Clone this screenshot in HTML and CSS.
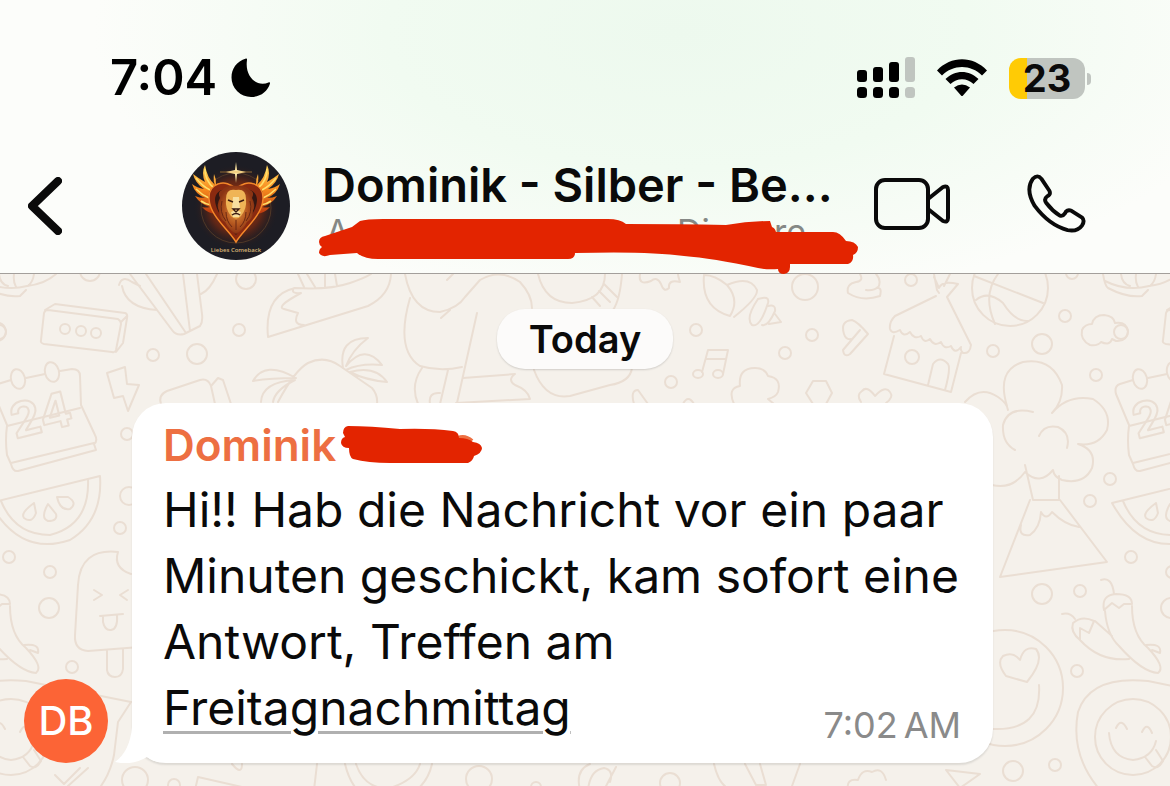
FILE: index.html
```html
<!DOCTYPE html>
<html lang="de">
<head>
  <meta charset="UTF-8">
  <meta name="viewport" content="width=device-width, initial-scale=1.0">
  <title>Dominik - Silber</title>
  <link rel="stylesheet" href="styles.css">
</head>
<body>
  <header class="header">
    <div class="status">
      <span class="clock">7:04</span>
      <svg class="moon" width="40" height="40" viewBox="0 0 40 40"><path d="M15 .6C5.500 3.500 .500 11 .500 19.500a19.500 19.500 0 0 0 19.500 19.500c9 0 16.500-5 19-13.500.300-1-.500-1.500-1.500-1C26 29.500 13.500 19 16 2c.200-1-.200-1.600-1-1.400Z"/></svg>
      <div class="status-icons">
        <svg width="58" height="42" viewBox="0 0 58 42">
          <g>
            <rect x="0" y="13" width="10" height="12" rx="3"/>
            <rect x="16" y="10" width="10" height="15" rx="3"/>
            <rect x="32" y="5" width="10" height="20" rx="3"/>
            <rect x="0" y="30" width="10" height="11" rx="3.500"/>
            <rect x="16" y="30" width="10" height="11" rx="3.500"/>
            <rect x="32" y="30" width="10" height="11" rx="3.500"/>
          </g>
          <g fill="#c0c5c0">
            <rect x="48" y="0" width="10" height="25" rx="3"/>
            <rect x="48" y="30" width="10" height="11" rx="3.500"/>
          </g>
        </svg>
        <svg class="wifi" width="50" height="38" viewBox="0 0 50 38">
          <path d="M0 11.500C14-3.500 36-3.500 50 11.500L45 16.500C34 5 16 5 5 16.500Z"/>
          <path d="M8.500 20C18 10.500 32 10.500 41.500 20L36.500 25C30 18.500 20 18.500 13.500 25Z"/>
          <path d="M17 28.500Q25 22.500 33 28.500L26 36.500Q25 37.500 24 36.500Z"/>
        </svg>
        <span class="battery">23</span>
      </div>
    </div>

    <div class="nav">
      <button class="icon-button back" aria-label="Back">
        <svg width="34" height="58" viewBox="0 0 34 58"><path d="M30 4 4 29 30 54"/></svg>
      </button>
      <svg class="group-photo" width="108" height="108" viewBox="0 0 108 108">
        <defs>
          <linearGradient id="fire" x1="0" y1="0" x2="0" y2="1">
            <stop offset="0" stop-color="#ffd45a"/>
            <stop offset=".5" stop-color="#f78a1d"/>
            <stop offset="1" stop-color="#b9380f"/>
          </linearGradient>
          <radialGradient id="glow">
            <stop offset="0" stop-color="#c2440f"/>
            <stop offset=".6" stop-color="#7d2a10" stop-opacity=".7"/>
            <stop offset="1" stop-color="#1b1a20" stop-opacity="0"/>
          </radialGradient>
          <radialGradient id="mane">
            <stop offset="0" stop-color="#e79a45"/>
            <stop offset=".6" stop-color="#b4571f"/>
            <stop offset="1" stop-color="#8a3414"/>
          </radialGradient>
        </defs>
        <circle cx="54" cy="54" r="54" fill="#1d1d24"/>
        <circle cx="54" cy="55" r="43" fill="url(#glow)"/>
        <circle cx="54" cy="56" r="35" fill="none" stroke="#6a4a2c" stroke-width=".6"/>
        <g id="wing">
          <path fill="url(#fire)" d="M42 36Q38 30 34 32Q34 26 32 22Q31 29 33 33Q25 26 23 13Q19 21 23 30Q16 26 11 22Q13 31 22 37Q15 36 10 32Q13 42 23 46Q17 46 13 44Q18 52 28 55Q24 56 20 55Q25 61 34 62Q24 49 28 38Q33 33 42 36Z"/>
          <path fill="none" stroke="#ffe06a" stroke-width="1.600" d="M23 17Q23 29 32 36M14 26Q20 34 28 38M14 37Q20 43 27 46M19 49Q23 52 29 53"/>
        </g>
        <use href="#wing" transform="matrix(-1 0 0 1 108 0)"/>
        <path d="M54 90C46 77 28 64 27 47C26 31 44 26 54 37C64 26 82 31 81 47C80 64 62 77 54 90Z" fill="#8a2a10" stroke="#f5882a" stroke-width="1.500"/>
        <path d="M54 83C47 72 34 63 33 48C33 39 43 33 54 42C65 33 75 39 75 48C74 63 61 72 54 83Z" fill="#351712"/>
        <path fill="url(#mane)" d="M54 34Q46 32 40 38Q35 40 38 46Q34 53 37 59Q37 67 43 70Q47 78 54 82Q61 78 65 70Q71 67 71 59Q74 53 70 46Q73 40 68 38Q62 32 54 34Z"/>
        <path fill="none" stroke="#682612" d="M40 49Q37 60 44 69M44 60Q44 69 50 75M68 49Q71 60 64 69M64 60Q64 69 58 75M54 68V78"/>
        <path fill="#efb456" d="M54 38Q44 36 44 47Q43 57 49 64Q54 69 59 64Q65 57 64 47Q64 36 54 38Z"/>
        <path fill="#f8dfa0" d="M51 45H57L58 57Q54 60 50 57ZM49 60Q54 57 59 60L57 65H51Z"/>
        <path fill="none" stroke="#3a1a10" stroke-width="1.400" d="M46 48L51 50M62 48L57 50M51 57H57L54 60ZM50 63Q54 60 58 63"/>
        <path fill="#ffe8a2" d="M54 10L55 18L64 20L55 22L54 31L53 22L44 20L53 18Z"/>
        <path stroke="#d99b42" stroke-width=".6" d="M38 20H70"/>
        <text x="54" y="100" text-anchor="middle" class="photo-label">Liebes Comeback</text>
      </svg>
      <div class="chat-info">
        <h1 class="chat-title">Dominik - Silber - Be...</h1>
        <div class="members"><span>A</span><span>Di</span><span>re</span></div>
        <svg class="marker marker-members" width="542" height="56" viewBox="0 0 542 56">
          <path d="M7 17Q1 18 1 23Q1 26 4 28Q1 30 1 34Q4 39 12 36L39 34Q46 40 60 40H250Q257 40 257 34Q330 32 366 37Q394 39 440 49Q450 51 460 50Q460 55 466 55Q472 54 472 48V45H530Q536 43 535 36Q540 34 540 28Q537 22 528 22Q522 13 515 13H458Q457 9 454 8L452 2Q430 2 408 6Q360 5 308 5Q302 0 290 0H65Q48 0 42 2L34 8Z"/>
        </svg>
      </div>
      <button class="icon-button video" aria-label="Video call">
        <svg width="76" height="52" viewBox="0 0 76 52"><rect x="2" y="2" width="52" height="48" rx="9"/><path d="M54 21 69 9Q74 7 74 12V40Q74 45 69 43L54 31"/></svg>
      </button>
      <button class="icon-button phone" aria-label="Voice call">
        <svg width="60" height="60" viewBox="0 0 62 62"><path d="M7 5Q12 0 16 5L24 17Q26 21 22 23Q18 26 21 30Q27 38 35 43Q38 44 40 41Q42 36 47 38L58 45Q61 48 58 53Q53 60 43 58Q24 53 9 33Q-1 16 7 5Z"/></svg>
      </button>
    </div>
  </header>

  <main class="chat">
    <svg class="wallpaper" viewBox="0 274 1170 512" preserveAspectRatio="xMinYMin slice" aria-hidden="true">
      <defs>
        <g id="doodles">
          <!-- basket, box, calendar -->
          <path d="M-19 274Q-17 286-14 288Q5 298 20 296L26 290M-17 281Q5 292 27 286Q45 284 56 274M14 274Q13 282 16 287M34 274Q33 282 28 286M-1 274Q0 284 8 286"/>
          <path d="M48 310 118 319Q121 321 121 324L116 350Q115 353 112 352L44 344Q40 343 41 340L44 313Q45 310 48 310ZM45 310 55 304 125 313Q128 314 127 318L123 343 116 352M121 322 127 316"/>
          <circle cx="65" cy="329" r="5"/><circle cx="81" cy="331" r="5"/><circle cx="96" cy="333" r="5"/>
          <path d="M11 380-2 384Q-8 386-6 394L7 425M26 378 45 374M60 371 72 369Q80 369 80 376L81 405 95 435Q98 441 94 444L96 450 18 471Q13 472 11 464L7 455Q5 440 7 426L80 408M11 463 94 443"/>
          <ellipse cx="18" cy="379" rx="7" ry="10" transform="rotate(-14 18 379)"/>
          <ellipse cx="52" cy="372" rx="7" ry="10" transform="rotate(-14 52 372)"/>
          <text x="15" y="439" transform="rotate(-14 15 439)">24</text>
          <!-- bolt, melon, ice lolly -->
          <path d="M107 373 125 367 127 384 139 385 128 411 123 396 114 398Z"/>
          <path d="M-10 503 100 476Q103 520 70 540Q20 557-10 503ZM1 501Q15 535 50 535Q90 525 88 479"/>
          <path d="M34 503Q20 513 24 518Q32 524 36 513ZM48 504Q40 518 48 521Q58 521 56 514ZM57 497Q60 511 70 509Q78 503 68 497Z"/>
          <path d="M118 552Q80 548 78 585L75 635Q74 650 88 651L140 647M118 552Q113 568 131 574M94 590 102 595 94 600M128 590 120 595 127 600M100 616 123 614M103 616V622Q105 631 111 630Q118 629 117 615M107 651V670Q108 677 115 677Q122 677 123 669V649"/>
          <path d="M131 702Q60 688 26 681Q-32 675-44 712Q-52 755-22 790M131 702 118 722 114 755Q110 775 98 790M55 775 64 784 80 768M68 786 88 768"/>
          <!-- cactus, fox tail, island -->
          <path d="M130 274 172 330Q176 336 184 334L200 326Q203 322 202 314L197 274M146 274 186 333M183 274 190 331M119 285Q122 275 132 282L140 286M122 286Q126 308 157 310M217 274Q210 290 201 294"/>
          <path d="M268 337 368 306Q390 295 391 274M268 337Q264 295 295 288Q330 290 350 283Q365 278 371 274M294 288Q290 294 301 293Q275 307 284 309L298 313Q292 325 304 325M298 274 304 287M307 274 315 287M325 274V287M335 274 337 286"/>
          <path d="M278 402Q295 370 308 363Q325 355 340 366L372 388Q378 395 377 404M253 381Q265 360 296 378Q270 378 253 381M295 380Q262 382 261 402M295 380Q275 390 273 402M343 368Q338 338 368 338Q352 350 346 366Q365 343 382 365Q360 363 346 370M350 372Q375 365 387 382Q365 380 350 372"/>
          <path d="M161 404Q158 395 167 391L200 380Q208 378 211 386L215 404M211 386 218 378 223 380 231 404"/>
          <!-- swimmer and ring behind the date -->
          <path d="M405 274Q412 312 440 312Q458 308 465 297L480 280Q500 268 520 282Q532 295 532 308M441 318 450 310M410 298Q395 350 420 366Q440 372 462 367M477 313 457 403M422 368Q410 385 418 404M448 370 440 404M463 378 515 374Q507 380 515 385Q528 390 530 399L456 403M430 404Q428 392 440 393M447 280 453 274"/>
          <path d="M538 274Q545 303 572 303Q605 300 605 274M622 274Q620 300 613 310M604 284 617 297M599 291 610 302M592 297 600 306M534 370Q545 400 570 396L610 385Q630 382 632 368"/>
          <path d="M640 274Q638 286 651 281Q657 276 661 284Q664 293 669 288Q668 279 680 282Q678 276 678 274M634 404Q630 390 638 390L648 404M683 404Q688 394 694 404"/>
          <path d="M704 275Q701 308 730 316Q740 300 727 285Q715 275 704 275M727 285Q750 275 757 290Q758 298 734 317M758 299Q770 295 768 303Q760 328 752 325Q745 318 758 299M768 306Q776 304 775 311Q768 327 762 325M775 314 781 322 769 324"/>
          <path d="M702 372 708 350 728 350 723 374M706 359 726 359"/>
          <ellipse cx="698" cy="374" rx="5" ry="4"/><ellipse cx="718" cy="374" rx="5" ry="4"/>
          <path d="M734 404Q727 388 740 386Q738 368 755 368Q765 368 768 376Q782 378 778 392Q776 397 768 399L774 404"/>
          <!-- hat, hut, ball, cloud -->
          <path d="M860 274Q864 281 856 282Q846 284 848 293Q862 302 880 296Q882 288 878 288Q882 280 876 274M866 290Q874 291 878 287"/>
          <path d="M844 334Q840 321 852 320Q858 322 868 334L850 354Q844 358 843 350L860 330M844 334Q846 340 851 339"/>
          <path d="M934 274 937 290 939 293M950 274 944 286M934 277 939 288Q942 280 958 284L947 297 971 345Q970 354 963 353Q960 350 961 347Q955 355 951 346Q944 350 941 342Q934 347 930 339Q924 344 921 336Q914 340 910 332Q903 338 900 330Q892 335 890 329Q889 322 895 316L936 296M894 336 884 374 951 392 961 353M928 385 933 364Q940 355 948 364Q951 368 945 390"/>
          <circle cx="912" cy="357" r="7"/>
          <circle cx="1010" cy="288" r="38"/>
          <path d="M974 276 1043 303M998 274Q982 295 995 324M976 300Q988 290 1003 303Q1015 322 1028 321"/>
          <path d="M1090 345Q1080 340 1082 330Q1085 324 1092 324Q1094 315 1104 315Q1114 316 1115 323Q1126 321 1128 331Q1127 342 1116 341L1112 339Q1110 346 1101 342Q1098 346 1090 345Z"/>
          <path d="M813 381H826L832 393 826 404H813L806 393ZM861 402Q856 395 862 391Q867 385 875 396Q885 385 890 392Q894 397 886 403"/>
          <!-- tree and peak -->
          <path d="M965 402Q980 385 998 397Q1007 403 1008 410M1007 406Q996 370 1023 362Q1052 357 1062 385Q1063 402 1052 413Q1068 394 1093 399Q1112 411 1107 430Q1098 447 1078 444Q1097 450 1092 468Q1084 485 1062 480Q1054 477 1053 470Q1040 486 1025 472Q1012 490 992 485M1033 412Q1008 406 1003 425Q1002 443 1015 450M1039 436Q1044 424 1058 427Q1071 433 1067 448M1025 465 1033 500H1059V476M1030 500 1000 577 1107 562 1060 500M1021 525Q1018 537 1030 535Q1040 528 1041 512Q1046 521 1052 512Q1065 525 1079 527"/>
          <!-- faces and chillies -->
          <circle cx="1005" cy="688" r="58"/>
          <path d="M993 729Q1042 731 1039 685M1027 682 1006 676Q996 663 1003 656Q1013 651 1020 660Q1024 645 1036 649Q1045 660 1027 682Z"/>
          <path d="M1101 580Q1112 576 1114 594M1104 610Q1101 595 1116 594Q1132 594 1132 604L1124 604 1119 608 1112 603ZM1105 611Q1107 635 1119 646Q1142 672 1158 673Q1166 667 1148 648Q1132 635 1132 606M1062 614Q1070 612 1075 619M1080 640Q1070 632 1073 623Q1082 615 1094 621L1089 633 1080 628ZM1095 621 1112 636M1080 640Q1100 662 1129 659M1146 645Q1162 643 1160 653L1152 650"/>
          <circle cx="1133" cy="737" r="38"/>
          <path d="M1116 728Q1121 717 1127 729M1142 732Q1147 721 1152 733M1109 733Q1111 758 1133 760Q1152 758 1156 741M1145 757 1152 766Q1158 770 1163 761L1156 750"/>
          <!-- strip below the message -->
          <path d="M195 790 198 777 242 787M232 764Q242 776 242 764M317 764 314 790M345 764Q355 805 390 801Q425 795 432 764M356 764Q365 790 390 788Q415 780 420 764M580 790Q575 770 590 764M588 790Q590 770 604 768Q614 770 610 782M604 790 616 767M714 764Q720 790 735 790M745 764 756 785H766L760 764M792 786 800 764M848 790Q846 778 858 780Q862 768 872 772Q882 766 886 780M946 770 980 774 960 788Z"/>
        </g>
        <!-- loose dots between the drawings -->
        <g id="dots">
          <circle cx="-1" cy="332" r="7"/><circle cx="90" cy="271" r="10"/><circle cx="246" cy="279" r="10"/><circle cx="239" cy="330" r="6"/>
          <circle cx="153" cy="355" r="6"/><circle cx="197" cy="354" r="10"/><circle cx="127" cy="434" r="6"/><circle cx="129" cy="496" r="9"/>
          <circle cx="120" cy="528" r="6"/><circle cx="9" cy="557" r="6"/><circle cx="50" cy="572" r="6"/><circle cx="49" cy="608" r="10"/>
          <circle cx="72" cy="667" r="6"/><circle cx="135" cy="780" r="13"/><circle cx="174" cy="785" r="6"/>
          <circle cx="479" cy="779" r="13"/><circle cx="536" cy="787" r="5"/><circle cx="670" cy="783" r="10"/>
          <circle cx="696" cy="330" r="6"/><circle cx="785" cy="353" r="6"/><circle cx="671" cy="382" r="6"/><circle cx="812" cy="335" r="6"/>
          <circle cx="805" cy="287" r="13"/><circle cx="911" cy="280" r="6"/><circle cx="1072" cy="273" r="6"/><circle cx="1065" cy="316" r="6"/>
          <circle cx="1042" cy="344" r="10"/><circle cx="993" cy="351" r="6"/><circle cx="1096" cy="375" r="6"/><circle cx="1110" cy="479" r="6"/>
          <circle cx="1090" cy="501" r="6"/><circle cx="1042" cy="594" r="10"/><circle cx="1080" cy="591" r="6"/><circle cx="1077" cy="671" r="6"/>
          <circle cx="1013" cy="771" r="10"/><circle cx="1055" cy="765" r="6"/>
        </g>
      </defs>
      <use href="#doodles"/><use href="#dots"/>
      <use href="#doodles" x="1122"/><use href="#dots" x="1122"/>
      <use href="#doodles" x="-1122"/>
    </svg>

    <div class="date">Today</div>

    <div class="message-row">
      <div class="sender-badge">DB</div>
      <article class="bubble">
        <svg class="tail" width="46" height="40" viewBox="0 0 46 40"><path d="M17 0V4Q15 28 0 39Q17 43 32 34Q38 39 46 39V0Z"/></svg>
        <div class="sender">
          <span>Dominik</span>
          <svg class="marker" width="144" height="40" viewBox="0 0 144 40">
            <path class="letter-edge" d="M118 13Q125 10 132 16"/>
            <path d="M8 1Q3 2 3 8L5 12Q1 13 1 18Q2 23 9 23Q9 32 13 34Q28 38 50 38H128Q133 36 134 31Q142 28 142 23Q141 18 133 17Q128 13 119 13Q119 7 113 6Q90 3 60 4Q30 1 8 1Z"/>
          </svg>
        </div>
        <div class="content">
          <p class="text">Hi!! Hab die Nachricht vor ein paar Minuten geschickt, kam sofort eine Antwort, Treffen am <a class="day" href="#">Freitagnachmittag</a></p>
          <time class="time" datetime="07:02">7:02&#8198;AM</time>
        </div>
      </article>
    </div>
  </main>
</body>
</html>
```
FILE: styles.css
```css
* {
  box-sizing: border-box;
}

body {
  margin: 0;
  min-height: 100vh;
  display: flex;
  flex-direction: column;
  font-family: Inter, "Liberation Sans", sans-serif;
  color: #0a0a0a;
  background: #f5f1eb;
  overflow-x: hidden;
}

/* header */
.header {
  position: relative;
  z-index: 2;
  padding: 48px 84px 13px 28px;
  border-bottom: 1px solid #a39f9b;
  background: radial-gradient(ellipse 50% 100% at 58% 12%, #edf9ee 0%, #f1fbf1 50%, #fcfdfa 100%);
}

.status {
  display: flex;
  align-items: center;
  height: 60px;
  padding-left: 82px;
}

.clock {
  font-size: 49px;
  line-height: 60px;
  font-weight: 600;
  color: #000;
}

.moon {
  margin-left: 14px;
}

.status-icons {
  display: flex;
  align-items: center;
  gap: 22px;
  margin-left: auto;
}

.battery {
  position: relative;
  width: 76px;
  margin-right: 1px;
  border-radius: 12px;
  background: linear-gradient(to right, #ffcb05 18px, #c0c5c0 18px);
  font-size: 38px;
  line-height: 41px;
  font-weight: 700;
  text-align: center;
}

/* battery cap */
.battery::after {
  content: "";
  position: absolute;
  left: 78px;
  top: 15px;
  width: 4px;
  height: 12px;
  border-radius: 0 4px 4px 0;
  background: #c0c5c0;
}

.nav {
  display: flex;
  align-items: center;
  height: 108px;
  margin-top: 44px;
}

.icon-button {
  display: block;
  flex: none;
  padding: 0;
  border: 0;
  background: none;
  cursor: pointer;
}

.icon-button svg {
  display: block;
  fill: none;
  stroke: #0a0a0a;
  stroke-width: 4;
  stroke-linecap: round;
  stroke-linejoin: round;
}

.back svg {
  stroke-width: 8;
}

.group-photo {
  flex: none;
  margin: 0 32px 0 120px;
}

.photo-label {
  font-family: "Open Sans", sans-serif;
  font-size: 6px;
  font-weight: 600;
  fill: #d9b676;
}

.chat-info {
  position: relative;
  flex: 1;
  min-width: 0;
}

.chat-title {
  margin: 0;
  font-size: 47px;
  line-height: 52px;
  font-weight: 600;
  white-space: nowrap;
}

.members {
  display: grid;
  grid-template-columns: 351px 97px auto;
  padding-left: 4px;
  font-size: 34px;
  line-height: 42px;
  color: #858885;
}

.marker {
  fill: #e32400;
}

.marker-members {
  position: absolute;
  left: -4px;
  top: 60px;
}

.video,
.phone {
  margin-bottom: 4px;
}

.video {
  margin-left: 12px;
}

.phone {
  margin-left: 76px;
}

/* chat */
.chat {
  position: relative;
  flex: 1;
  padding: 35px 24px 22px;
  overflow: hidden;
}

.wallpaper {
  position: absolute;
  left: 0;
  top: 0;
  width: 100%;
  height: 100%;
  fill: none;
  stroke: #eaded3;
  stroke-width: 2;
  stroke-linecap: round;
  stroke-linejoin: round;
}

.wallpaper text {
  font-size: 48px;
  font-weight: 700;
}

.date {
  position: relative;
  width: fit-content;
  margin: 0 auto;
  padding: 0 32px;
  border-radius: 28px;
  background: #fcfbfa;
  box-shadow: 0 1px 2px rgba(0, 0, 0, 0.15);
  font-size: 38px;
  line-height: 60px;
  font-weight: 600;
}

.message-row {
  position: relative;
  display: flex;
  align-items: flex-end;
  gap: 24px;
  margin-top: 34px;
  padding-right: 153px;
}

.sender-badge {
  flex: none;
  width: 84px;
  border-radius: 50%;
  background: #fc6436;
  color: #fff;
  font-size: 40px;
  line-height: 84px;
  font-weight: 500;
  text-align: center;
}

.bubble {
  position: relative;
  flex: 1;
  padding: 16px 24px 18px 31px;
  border-radius: 34px;
  background: #fff;
  box-shadow: 0 2px 2px rgba(0, 0, 0, 0.1);
}

.tail {
  position: absolute;
  left: -17px;
  bottom: 0;
  fill: #fff;
}

.sender {
  display: flex;
  align-items: center;
  gap: 4px;
  margin-bottom: 6px;
  color: #ed6f42;
  font-size: 44px;
  line-height: 52px;
  font-weight: 600;
}

.letter-edge {
  fill: none;
  stroke: #ed6f42;
  stroke-width: 4;
}

/* text and time share one cell, the time sits in the free end of the last line */
.content {
  display: grid;
}

.text,
.time {
  grid-area: 1 / 1;
}

.text {
  margin: 0 0 4px;
  font-size: 48px;
  line-height: 66px;
}

.day {
  color: inherit;
  text-decoration: underline #b0b0b0 3px;
  text-underline-offset: 6px;
}

.time {
  align-self: end;
  justify-self: end;
  margin-right: 8px;
  color: #8a8a8a;
  font-size: 36px;
  line-height: 40px;
}
```
